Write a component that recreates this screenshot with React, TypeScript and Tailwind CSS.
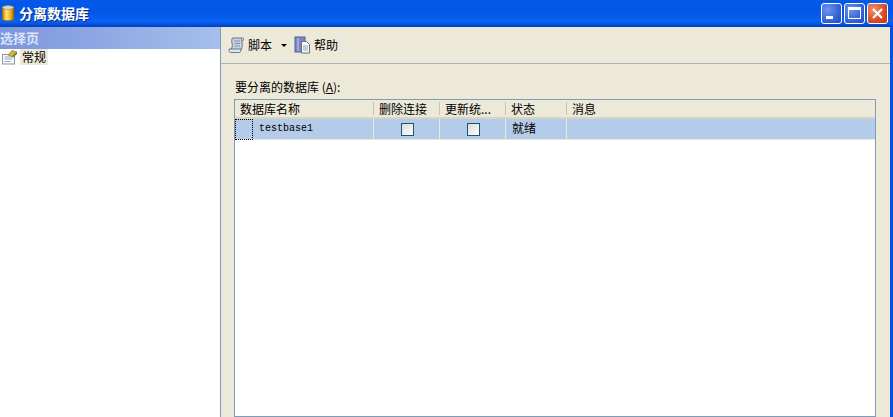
import React from 'react';

const cjk = 'font-["Noto_Sans_CJK_SC","Liberation_Sans",sans-serif]';

const DatabaseIcon = () => (
  <svg width="14" height="18" viewBox="0 0 14 18">
    <defs>
      <linearGradient id="can" x1="0" x2="1" y1="0" y2="0">
        <stop offset="0" stopColor="#a86f08" />
        <stop offset="0.35" stopColor="#ffe27a" />
        <stop offset="0.7" stopColor="#f2b31c" />
        <stop offset="1" stopColor="#9c6a08" />
      </linearGradient>
    </defs>
    <path d="M1 3.5C1 1.5 13 1.5 13 3.5V15C13 17.4 1 17.4 1 15Z" fill="url(#can)" stroke="#6b5a2a" strokeWidth="0.7" />
    <ellipse cx="7" cy="3.5" rx="5.6" ry="1.9" fill="#d8d8c8" stroke="#8a8a70" strokeWidth="0.6" />
  </svg>
);

const CaptionButton = ({ tone, children }: { tone: 'blue' | 'red'; children: React.ReactNode }) => (
  <div
    className={`flex h-[21px] w-[21px] items-center justify-center rounded-[3px] border border-white ${
      tone === 'red'
        ? 'bg-[radial-gradient(circle_at_30%_30%,#f0916e,#d84a22_60%,#c2350f)]'
        : 'bg-[radial-gradient(circle_at_30%_30%,#6f94ee,#3563d8_60%,#2448b8)]'
    }`}
  >
    {children}
  </div>
);

const GeneralIcon = () => (
  <svg width="17" height="16" viewBox="0 0 17 16">
    <rect x="1.5" y="5.5" width="12" height="9.5" fill="#fafafa" stroke="#8c94a4" />
    <path d="M3.5 8h8M3.5 10h8M3.5 12.5h6" stroke="#9aa4b8" />
    <path d="M7 6 11 1.5l5 1.5-5 4.5Z" fill="#e0b030" stroke="#7a6a20" strokeWidth="0.6" />
    <path d="M11 7.5 16 3v2l-4 3.5Z" fill="#4c8c3c" />
  </svg>
);

const ScriptIcon = () => (
  <svg width="17" height="18" viewBox="0 0 17 18">
    <path d="M4.5 2H14.5C13.5 3 13.5 5 14 7C14.5 9 14.5 11 13 14H3C4.5 11 4.5 9 4 7C3.5 5 3.5 3.5 4.5 2Z" fill="#c9d2e2" stroke="#5a6a88" strokeWidth="0.9" />
    <path d="M14.5 2C16.2 2 16.2 5 14 5" fill="#e6ebf3" stroke="#5a6a88" strokeWidth="0.9" />
    <path d="M1 13H13C13 15 12.5 16.5 11.5 16.5H2.5C1.5 16.5 1 15 1 13Z" fill="#dfe5ef" stroke="#5a6a88" strokeWidth="0.9" />
    <path d="M6 5h6M6.5 7.5h5.5M6.5 10h5.5" stroke="#6f7f9c" strokeWidth="0.8" />
  </svg>
);

const HelpIcon = () => (
  <svg width="17" height="18" viewBox="0 0 17 18">
    <rect x="1" y="1" width="10" height="15" fill="#7c84c4" stroke="#565e9a" />
    <rect x="3" y="2" width="2" height="13" fill="#a4aade" />
    <path d="M7.5 5.5h5l3 3v8.5h-8Z" fill="#fafafa" stroke="#6c7078" />
    <path d="M9 10h5M9 12h5M9 14h5" stroke="#9aa0a8" />
  </svg>
);

const Checkbox = () => (
  <div className="h-[13px] w-[13px] border border-[#1c5180] bg-gradient-to-br from-[#dcdcd4] to-white" />
);

const columns = [
  { label: '数据库名称', width: 'w-[139px]' },
  { label: '删除连接', width: 'w-[66px]' },
  { label: '更新统...', width: 'w-[66px]' },
  { label: '状态', width: 'w-[61px]' },
  { label: '消息', width: 'flex-1' },
];

export default function App() {
  return (
    <div className={`flex h-[417px] w-[893px] flex-col overflow-hidden bg-white text-[12px] leading-none text-black ${cjk}`}>
      <div className="flex h-[27px] shrink-0 items-center justify-between bg-[linear-gradient(180deg,#0a5ae0_0%,#0058ee_12%,#0458e6_50%,#0a62f4_80%,#0040c0_100%)] pr-[5px]">
        <div className="flex items-center gap-[4px] pl-[1px] pb-[2px]">
          <DatabaseIcon />
          <span className="text-[14px] font-bold text-white [text-shadow:1px_1px_0_#0a2a80]">分离数据库</span>
        </div>
        <div className="flex gap-[2px] pb-[1px]">
          <CaptionButton tone="blue">
            <div className="mt-[9px] mr-[5px] h-[3px] w-[7px] bg-white" />
          </CaptionButton>
          <CaptionButton tone="blue">
            <div className="h-[12px] w-[13px] border border-t-[3px] border-white" />
          </CaptionButton>
          <CaptionButton tone="red">
            <svg width="13" height="13" viewBox="0 0 13 13">
              <path d="M2 2l9 9M11 2l-9 9" stroke="#fff" strokeWidth="2.2" />
            </svg>
          </CaptionButton>
        </div>
      </div>

      <div className="flex min-h-0 flex-1">
        <div className="w-[220px] shrink-0 bg-white">
          <div className="flex h-[22px] items-center bg-gradient-to-r from-[#7c95dc] to-[#a6bfec] pb-[2px] text-[13px] font-bold text-[#dbe4f8]">
            选择页
          </div>
          <div className="flex h-[16px] items-center pl-[1px]">
            <GeneralIcon />
            <span className="ml-[2px] flex h-[16px] items-center bg-[#ece9d8] px-[2px]">常规</span>
          </div>
        </div>

        <div className="flex min-w-0 flex-1 flex-col border-l border-[#7f9db9] border-r-[3px] border-r-[#0a50e0] bg-[#ece9d8]">
          <div className="flex h-[37px] shrink-0 items-center border-b border-[#a8b4bc] pl-[7px]">
            <ScriptIcon />
            <span className="ml-[3px]">脚本</span>
            <div className="ml-[9px] h-0 w-0 border-x-[3px] border-t-[3px] border-x-transparent border-t-black" />
            <div className="ml-[7px]"><HelpIcon /></div>
            <span className="ml-[3px]">帮助</span>
          </div>

          <div className="flex min-h-0 flex-1 flex-col pt-[17px] pl-[13px] pr-[14px]">
            <div className="h-[18px] shrink-0 pl-[1px]">
              要分离的数据库 (<span className="underline">A</span>):
            </div>
            <div className="flex min-h-0 flex-1 flex-col border border-[#7f9db9] bg-white">
              <div className="flex h-[19px] shrink-0 items-center border-b-[2px] border-[#d8d4c4] bg-[#ece9d8]">
                {columns.map((col) => (
                  <div
                    key={col.label}
                    className={`${col.width} flex h-[13px] items-center whitespace-nowrap border-r border-[#c8c4b4] pl-[5px] last:border-r-0`}
                  >
                    {col.label}
                  </div>
                ))}
              </div>
              <div className="flex h-[21px] shrink-0 border-b border-[#ece9d8] bg-[#b5cbea]">
                <div className="flex w-[139px] items-center border-r border-[#ece9d8]">
                  <div className="h-[21px] w-[18px] shrink-0 border border-dotted border-black" />
                  <span className="ml-[6px] font-['Liberation_Mono',monospace] text-[10px]">testbase1</span>
                </div>
                <div className="flex w-[66px] items-center justify-center border-r border-[#ece9d8] pl-[2px]">
                  <Checkbox />
                </div>
                <div className="flex w-[66px] items-center justify-center border-r border-[#ece9d8] pl-[2px]">
                  <Checkbox />
                </div>
                <div className="flex w-[61px] items-center border-r border-[#ece9d8] pl-[6px] pb-[2px]">就绪</div>
                <div className="flex-1" />
              </div>
            </div>
          </div>
        </div>
      </div>
    </div>
  );
}
